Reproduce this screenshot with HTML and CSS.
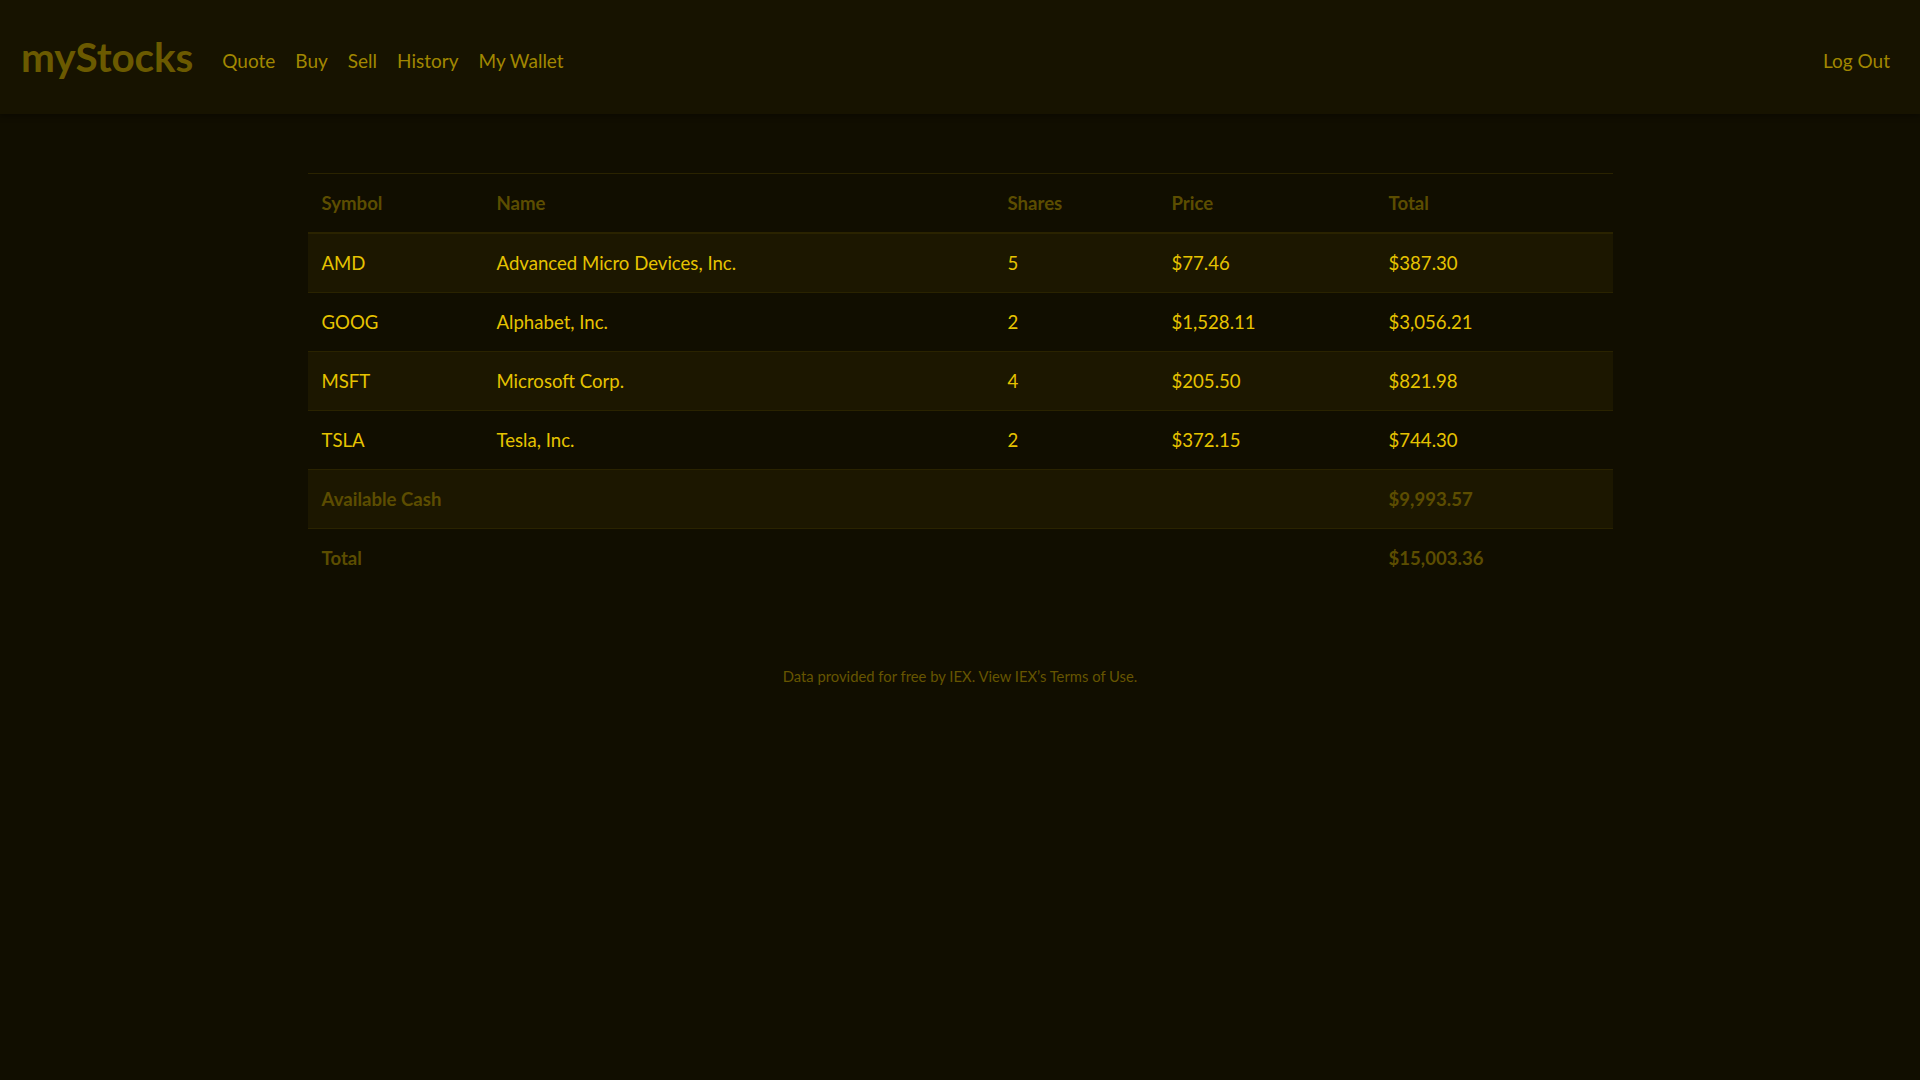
FILE: index.html
```html
<!DOCTYPE html>
<html lang="en">
<head>
<meta charset="utf-8">
<title>myStocks</title>
<link rel="stylesheet" href="styles.css">
</head>
<body>
<nav class="navbar">
  <div class="nav-left">
    <a class="brand" href="#">myStocks</a>
    <ul class="nav-links">
      <li><a href="#">Quote</a></li>
      <li><a href="#">Buy</a></li>
      <li><a href="#">Sell</a></li>
      <li><a href="#">History</a></li>
      <li><a href="#">My Wallet</a></li>
    </ul>
  </div>
  <a class="nav-link-right" href="#">Log Out</a>
</nav>
<main class="main">
  <table class="stocks">
    <colgroup>
      <col class="c-sym"><col class="c-name"><col class="c-shares"><col class="c-price"><col class="c-total">
    </colgroup>
    <thead>
      <tr><th>Symbol</th><th>Name</th><th>Shares</th><th>Price</th><th>Total</th></tr>
    </thead>
    <tbody>
      <tr class="odd"><td>AMD</td><td>Advanced Micro Devices, Inc.</td><td>5</td><td>$77.46</td><td>$387.30</td></tr>
      <tr><td>GOOG</td><td>Alphabet, Inc.</td><td>2</td><td>$1,528.11</td><td>$3,056.21</td></tr>
      <tr class="odd"><td>MSFT</td><td>Microsoft Corp.</td><td>4</td><td>$205.50</td><td>$821.98</td></tr>
      <tr><td>TSLA</td><td>Tesla, Inc.</td><td>2</td><td>$372.15</td><td>$744.30</td></tr>
      <tr class="odd summary"><td colspan="4">Available Cash</td><td>$9,993.57</td></tr>
      <tr class="summary last"><td colspan="4">Total</td><td>$15,003.36</td></tr>
    </tbody>
  </table>
</main>
<footer class="footer">
  Data provided for free by <a href="#">IEX</a>. <a href="#">View IEX’s Terms of Use</a>.
</footer>
</body>
</html>
```
FILE: styles.css
```css
* { box-sizing: border-box; }
html, body { margin: 0; padding: 0; }
body {
  background: #110e00;
  color: #e6c300;
  font-family: Lato, "Open Sans", sans-serif;
  min-height: 1080px;
}
a { text-decoration: none; color: inherit; }

.navbar {
  height: 114px;
  background: #171300;
  box-shadow: 0 2px 6px rgba(0,0,0,0.35);
  display: flex;
  align-items: center;
  justify-content: space-between;
  padding: 0 30px 0 21px;
}
.nav-left { display: flex; align-items: center; }
.brand {
  font-size: 40.5px;
  font-weight: 700;
  color: #6b5a00;
  margin-right: 29px;
  position: relative;
  top: -1px;
  letter-spacing: -0.1px;
}
.nav-links {
  display: flex;
  list-style: none;
  margin: 0;
  padding: 0;
  gap: 20px;
}
.nav-links a, .nav-link-right {
  font-size: 19px;
  color: #a18700;
  position: relative;
  top: 3px;
}

.main {
  padding-top: 59px;
  display: flex;
  justify-content: center;
}
.stocks {
  width: 1305px;
  border-collapse: collapse;
  font-size: 18.6px;
}
.c-sym { width: 175px; }
.c-name { width: 511px; }
.c-shares { width: 164px; }
.c-price { width: 217px; }
.c-total { width: 238px; }
.stocks th, .stocks td {
  text-align: left;
  padding: 16px 14px;
  line-height: 26px;
  border-top: 1px solid #2a2300;
}
.stocks th {
  font-weight: 700;
  color: #5c4d00;
  border-bottom: 2px solid #2a2300;
  padding-top: 16px;
  padding-bottom: 16px;
}
.stocks tr.odd td { background: #1c1700; }
.stocks tr.summary td { font-weight: 700; color: #5c4d00; }

.footer {
  text-align: center;
  font-size: 14.8px;
  color: #665500;
  margin-top: 80px;
}
```
